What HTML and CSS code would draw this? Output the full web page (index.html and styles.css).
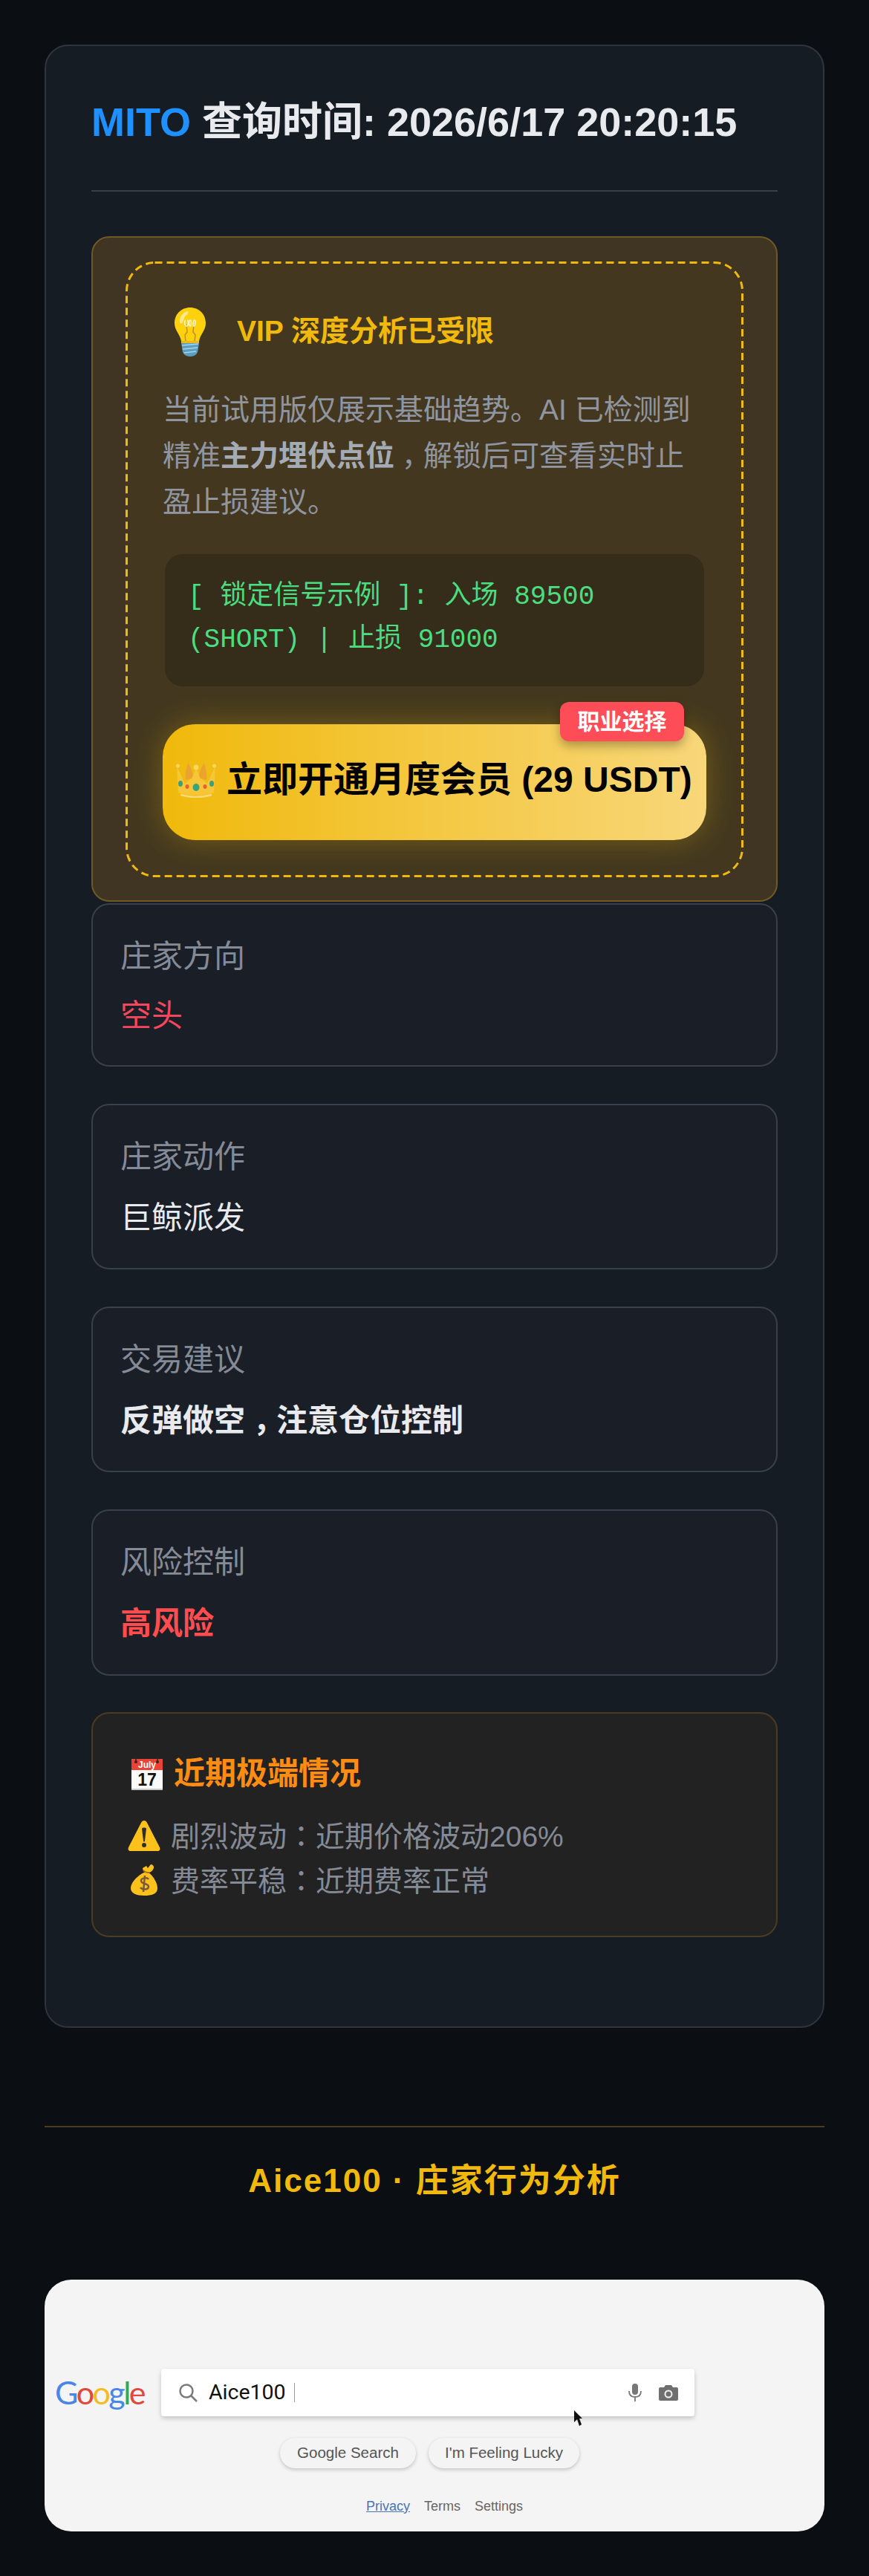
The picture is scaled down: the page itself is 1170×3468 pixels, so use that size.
FILE: index.html
```html
<!DOCTYPE html>
<html lang="zh">
<head>
<meta charset="utf-8">
<title>MITO 查询</title>
<link rel="stylesheet" href="styles.css">
</head>
<body>
<div class="card">
	<h2 class="head"><span class="coin">MITO</span> 查询时间: 2026/6/17 20:20:15</h2>

	<div class="vip">
		<div class="lock">
			<svg class="dash"><rect rx="38" ry="38"/></svg>
			<div class="lock-title">
				<svg class="bulb" viewBox="0 0 42 66" width="42" height="66">
					<path d="M21 0C9 0 0 9 0 21c0 10 7 14 9 24h24c2-10 9-14 9-24C42 9 33 0 21 0z" fill="#fdd10e"/>
					<path d="M7 19C7 11 12 6 18 5c2 2-1 4-4 7-2 3-2 7-4 9-2 1-3 0-3-2z" fill="#ffe98a"/>
					<path d="M16 23l1 10-3 4 1 8M26 23l-1 10 3 4-1 8" fill="none" stroke="#c98a1c" stroke-width="1.5"/>
					<path d="M15 17c-2 0-2 8 1 8s3-8 1-8M21 17c-2 0-2 8 0 8s2-8 0-8M27 17c-2 0-3 8-1 8s3-8 1-8" fill="none" stroke="#fff6cf" stroke-width="1.6"/>
					<path d="M9 45h24v3l-2 12c-1 3-5 6-10 6s-9-3-10-6L9 48z" fill="#5b9fc0"/>
					<path d="M9 45h24v3H9z" fill="#e8b923"/>
					<path d="M10 51l22-2M11 56l20-2M13 61l16-2" stroke="#a9d3e6" stroke-width="1.6"/>
				</svg>
				<span>VIP 深度分析已受限</span>
			</div>
			<p class="lock-text">
				<span class="line">当前试用版仅展示基础趋势。AI 已检测到</span>
				<span class="line">精准<b>主力埋伏点位</b><span class="comma">，</span>解锁后可查看实时止</span>
				<span class="line">盈止损建议。</span>
			</p>
			<div class="signal">[ 锁定信号示例 ]: 入场 89500 (SHORT) | 止损 91000</div>
			<a class="buy" href="javascript:;">
				<span class="tag">职业选择</span>
				<svg class="crown" viewBox="0 0 54 48" width="54" height="48">
					<path d="M13 24C12 12 15 7 16 1c3 5 6 9 7 20zM41 24c1-12-2-17-3-23-3 5-6 9-7 20z" fill="#ea9f36"/>
					<path d="M1 5l11 24 10-8 5-14 5 14 10 8L53 5l-2 36c-14 5-34 5-48 0z" fill="#f8c93f"/>
					<circle cx="2.500" cy="5" r="2.500" fill="#fbdc6a"/><circle cx="51.500" cy="5" r="2.500" fill="#fbdc6a"/><circle cx="27" cy="7" r="3.500" fill="#fbdc6a"/>
					<path d="M6 44c14 4 28 4 42 0" fill="none" stroke="#fbe08a" stroke-width="2.500"/>
					<ellipse cx="6" cy="29" rx="3" ry="4" fill="#1e9c8c"/><ellipse cx="48" cy="29" rx="3" ry="4" fill="#1e9c8c"/>
					<ellipse cx="15" cy="33" rx="2.500" ry="3" fill="#e5533d"/><ellipse cx="39" cy="33" rx="2.500" ry="3" fill="#e5533d"/>
					<ellipse cx="27" cy="34" rx="4.500" ry="5" fill="#17a08c"/>
				</svg>
				<span>立即开通月度会员 (29 USDT)</span>
			</a>
		</div>
	</div>

	<div class="item">
		<div class="label">庄家方向</div>
		<div class="value short">空头</div>
	</div>
	<div class="item">
		<div class="label">庄家动作</div>
		<div class="value">巨鲸派发</div>
	</div>
	<div class="item">
		<div class="label">交易建议</div>
		<div class="value strong">反弹做空<span class="comma">，</span>注意仓位控制</div>
	</div>
	<div class="item">
		<div class="label">风险控制</div>
		<div class="value strong danger">高风险</div>
	</div>

	<div class="extreme">
		<div class="extreme-title">
			<svg viewBox="0 0 42 44" width="42" height="44">
				<rect x="0" y="2" width="42" height="42" rx="1.500" fill="#fafafa"/>
				<path d="M0 3.500A1.500 1.500 0 0 1 1.500 2h39A1.500 1.500 0 0 1 42 3.500V17H0z" fill="#ea4335"/>
				<rect x="0" y="42" width="42" height="2" fill="#c9c9c9"/>
				<path d="M6 0v6M35 0v6" stroke="#3a2222" stroke-width="1.500"/>
				<circle cx="6" cy="6" r="2" fill="#3a2222"/><circle cx="35" cy="6" r="2" fill="#3a2222"/>
				<text class="cal-month" x="21" y="14">July</text>
				<text class="cal-day" x="21" y="38">17</text>
			</svg>
			<span>近期极端情况</span>
		</div>
		<div class="extreme-row">
			<svg viewBox="0 0 44 44" width="44" height="44">
				<path d="M22 2c2 0 3 1 4 3l17 33c1 3 0 5-3 5H4c-3 0-4-2-3-5L18 5c1-2 2-3 4-3z" fill="#fcc21b"/>
				<path d="M19 13c0-2 6-2 6 0l-2 16c0 2-2 2-2 0z" fill="#2f2f2f"/>
				<circle cx="22" cy="35" r="3" fill="#2f2f2f"/>
			</svg>
			<span>剧烈波动<span class="colon" lang="ja">：</span>近期价格波动206%</span>
		</div>
		<div class="extreme-row">
			<svg viewBox="0 0 44 44" width="44" height="44">
				<path d="M24 11c-8 3-20 13-20 22 0 7 8 10 18 10s18-2 18-10c0-7-6-17-12-21z" fill="#fcc21b"/>
				<path d="M20 6l5-3 2 3 4-5c4 0 5 4 3 7s-5 5-9 4c-3-1-5-3-5-6z" fill="#fcc21b"/>
				<path d="M21 9c2 3 5 3 8 3" stroke="#a56c15" stroke-width="2" fill="none"/>
				<path d="M28 21c-2-3-10-2-10 2 0 5 10 3 10 8 0 4-8 5-11 1M23 16l-2 22" fill="none" stroke="#7a5a3a" stroke-width="2.500"/>
			</svg>
			<span>费率平稳<span class="colon" lang="ja">：</span>近期费率正常</span>
		</div>
	</div>
</div>

<div class="foot">Aice100 · 庄家行为分析</div>

<div class="shot">
	<div class="shot-search">
		<div class="logo"><i class="g-blue">G</i><i class="g-red">o</i><i class="g-yellow">o</i><i class="g-blue">g</i><i class="g-green">l</i><i class="g-red">e</i></div>
		<div class="box">
			<svg class="ico-search" viewBox="0 0 26 26" width="26" height="26">
				<circle cx="11" cy="11" r="8.500" fill="none" stroke="#7b7b7b" stroke-width="2.500"/>
				<path d="M17 17l8 8" stroke="#7b7b7b" stroke-width="2.500"/>
			</svg>
			<span class="query">Aice100</span>
			<span class="caret"></span>
			<svg class="ico-mic" viewBox="0 0 18 24" width="18" height="24">
				<rect x="5" y="0" width="8" height="15" rx="4" fill="#777"/>
				<path d="M1 10c0 6 4 8 8 8s8-2 8-8M9 18v6" fill="none" stroke="#777" stroke-width="1.800"/>
			</svg>
			<svg class="ico-cam" viewBox="0 0 26 22" width="26" height="22">
				<path d="M2 4h5l2-3h8l2 3h5a2 2 0 0 1 2 2v14a2 2 0 0 1-2 2H2a2 2 0 0 1-2-2V6a2 2 0 0 1 2-2z" fill="#6f6f6f"/>
				<circle cx="13" cy="13" r="4.500" fill="none" stroke="#f2f2f2" stroke-width="2"/>
			</svg>
			<svg class="pointer" viewBox="0 0 12 21" width="12" height="21">
				<path d="M0 0l11 11H7l3 8-3 2-3-9-4 4z" fill="#111"/>
			</svg>
		</div>
	</div>
	<div class="shot-btns">
		<span class="btn btn-a">Google Search</span>
		<span class="btn btn-b">I'm Feeling Lucky</span>
	</div>
	<div class="shot-links">
		<a href="javascript:;">Privacy</a>
		<span>Terms</span>
		<span>Settings</span>
	</div>
</div>
</body>
</html>
```
FILE: styles.css
```css
*{margin:0; padding:0; box-sizing:border-box;}
body{background:#0b0e13; padding:60px; font-family:"Liberation Sans","Noto Sans CJK SC",sans-serif; line-height:1.6; color:#e8eaed;}

.comma{margin-left:0.25em; letter-spacing:-0.25em;}
.colon{font-family:"Noto Sans CJK JP",sans-serif;}

.card{background:#161c24; border:2px solid #2f343d; border-radius:32px; padding:60px 61px 120px;}
.head{font-size:54px; font-weight:bold; line-height:85px; padding-bottom:49px; border-bottom:2px solid #393e48; margin-bottom:60px; color:#e8eaed;}
.coin{color:#1e90ff;}

.vip{background:#3f3522; border:2px solid #6f5a24; border-radius:24px; padding:32px 44px 31px;}
.lock{position:relative; background:#43381f; border-radius:40px; padding:62px 50px 50px;}
.dash{position:absolute; top:0; left:0; width:100%; height:100%; pointer-events:none;}
.dash rect{x:1.5px; y:1.5px; width:calc(100% - 3px); height:calc(100% - 3px); fill:none; stroke:#f0b90b; stroke-width:3; stroke-dasharray:10 6;}
.lock-title{display:flex; align-items:center; gap:42px; padding-left:16px; color:#f0b90b; font-size:39px; font-weight:bold;}
.lock-title span{margin-bottom:2px;}
.lock-text{margin-top:41px; font-size:39px; line-height:62px; color:#8f95a1;}
.lock-text .line{display:block;}
.lock-text b{color:#a5abb5;}
.signal{margin:39px 3px 0; height:178px; padding:29px 31px 0; background:#352c1a; border-radius:24px; font-family:"Liberation Mono","Noto Sans CJK SC",monospace; font-size:36px; line-height:57.5px; color:#4ade80;}
.buy{position:relative; margin-top:51px; height:156px; display:flex; align-items:center; gap:14px; padding:0 0 6px 18px; border-radius:44px; background:linear-gradient(90deg,#f0b90b,#f8d77a); box-shadow:0 0 40px rgba(240,185,11,0.3); color:#000; font-size:48px; font-weight:bold; text-decoration:none; white-space:nowrap;}
.crown{opacity:0.85;}
.tag{position:absolute; top:-30px; right:30px; width:167px; height:53px; background:#ff4d57; border-radius:12px; box-shadow:0 6px 14px rgba(0,0,0,0.3); color:#fff; font-size:30px; line-height:53px; text-align:center;}

.item{background:#1a1e27; border:2px solid #3a404b; border-radius:24px; padding:38px 37px 34px; margin-bottom:50px;}
.vip + .item{margin-top:2px;}
.label{font-size:42px; line-height:64px; color:#858b96;}
.value{margin-top:16px; font-size:42px; color:#e8eaed;}
.short{line-height:64px; color:#f6465d;}
.strong{font-weight:bold;}
.danger{color:#ff4d4f;}

.extreme{background:#222222; border:2px solid #4a3c23; border-radius:24px; margin-top:-1px; padding:48px 46px 45px;}
.extreme-title{display:flex; align-items:center; gap:15px; margin-left:6px; font-size:42px; font-weight:bold; line-height:66px; color:#ff8c12;}
.extreme-row{display:flex; align-items:center; gap:14px; height:60px; margin-left:1px; font-size:39px; line-height:60px; color:#858b96;}
.extreme-title + .extreme-row{margin-top:20px;}
.cal-month{font-family:"Liberation Sans",sans-serif; font-size:12px; font-weight:bold; fill:#fff; text-anchor:middle;}
.cal-day{font-family:"Liberation Sans",sans-serif; font-size:23px; font-weight:bold; fill:#111; text-anchor:middle;}

.foot{margin-top:132px; border-top:2px solid #4a3d1e; padding-top:40px; height:207px; text-align:center; font-size:44px; font-weight:bold; line-height:64px; letter-spacing:2px; color:#f0b90b;}

.shot{height:339px; background:#f4f4f5; border-radius:36px; padding-top:120px; font-family:Roboto,"Liberation Sans",sans-serif;}
.shot-search{display:flex; align-items:center; padding-left:14px;}
.logo{width:143px; font-family:Lato,sans-serif; font-size:43px; line-height:64px; letter-spacing:-2.5px;}
.logo i{font-style:normal;}
.g-blue{color:#4a86e8;}
.g-red{color:#e0483c;}
.g-yellow{color:#f2bd1d;}
.g-green{color:#34a853;}
.box{position:relative; width:718px; height:64px; display:flex; align-items:center; background:#fff; border-radius:4px; box-shadow:0 3px 6px rgba(0,0,0,0.2);}
.ico-search{margin-left:23px;}
.query{margin-left:15px; font-size:28.5px; color:#111;}
.caret{width:1px; height:26px; margin-left:11px; background:#999;}
.ico-mic{margin-left:auto;}
.ico-cam{margin:0 22px 0 23px;}
.pointer{position:absolute; left:556px; top:56px;}
.shot-btns{display:flex; gap:17px; margin:29px 0 0 317px;}
.btn{height:41px; border-radius:21px; background:#f4f4f5; box-shadow:0 2px 5px rgba(0,0,0,0.2); font-family:"Liberation Sans",sans-serif; font-size:20.5px; line-height:40px; text-align:center; color:#555;}
.btn-a{width:183px;}
.btn-b{width:203px;}
.shot-links{display:flex; gap:19px; margin:37px 0 0 433px; font-family:"Liberation Sans",sans-serif; font-size:18px; line-height:28px; color:#666;}
.shot-links a{color:#4a74b8;}
```
